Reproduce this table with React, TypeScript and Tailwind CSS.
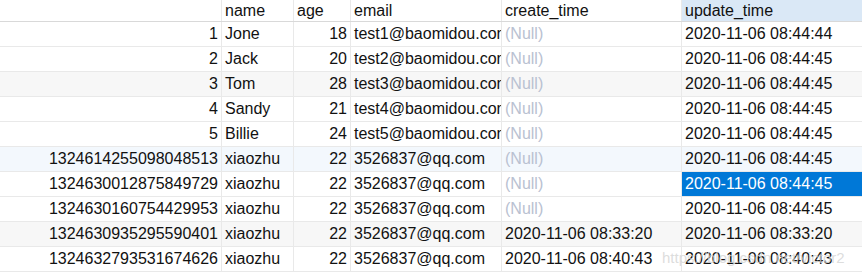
import clsx from 'clsx';

type Row = {
  id: string;
  name: string;
  age: number;
  email: string;
  createTime: string | null;
  updateTime: string;
  bg?: 'gray' | 'active';
  selected?: boolean;
};

const rows: Row[] = [
  { id: '1', name: 'Jone', age: 18, email: 'test1@baomidou.com', createTime: null, updateTime: '2020-11-06 08:44:44' },
  { id: '2', name: 'Jack', age: 20, email: 'test2@baomidou.com', createTime: null, updateTime: '2020-11-06 08:44:45' },
  { id: '3', name: 'Tom', age: 28, email: 'test3@baomidou.com', createTime: null, updateTime: '2020-11-06 08:44:45', bg: 'gray' },
  { id: '4', name: 'Sandy', age: 21, email: 'test4@baomidou.com', createTime: null, updateTime: '2020-11-06 08:44:45' },
  { id: '5', name: 'Billie', age: 24, email: 'test5@baomidou.com', createTime: null, updateTime: '2020-11-06 08:44:45' },
  { id: '1324614255098048513', name: 'xiaozhu', age: 22, email: '3526837@qq.com', createTime: null, updateTime: '2020-11-06 08:44:45', bg: 'active' },
  { id: '1324630012875849729', name: 'xiaozhu', age: 22, email: '3526837@qq.com', createTime: null, updateTime: '2020-11-06 08:44:45', selected: true },
  { id: '1324630160754429953', name: 'xiaozhu', age: 22, email: '3526837@qq.com', createTime: null, updateTime: '2020-11-06 08:44:45' },
  { id: '1324630935295590401', name: 'xiaozhu', age: 22, email: '3526837@qq.com', createTime: '2020-11-06 08:33:20', updateTime: '2020-11-06 08:33:20', bg: 'gray' },
  { id: '1324632793531674626', name: 'xiaozhu', age: 22, email: '3526837@qq.com', createTime: '2020-11-06 08:40:43', updateTime: '2020-11-06 08:40:43' },
];

const cell = 'h-full shrink-0 overflow-hidden whitespace-nowrap border-r border-[#e9e9e9] px-[3px]';

export default function App() {
  return (
    <div className="relative h-[279px] w-[862px] overflow-hidden bg-white font-['Liberation_Sans',Arial,sans-serif] text-[16px] leading-[24px] text-[#111]">
      <div className="flex h-[22px] border-b border-[#d9d9d9] leading-[21px]">
        <div className={clsx(cell, 'w-[222px]')} />
        <div className={clsx(cell, 'w-[72px]')}>name</div>
        <div className={clsx(cell, 'w-[57px]')}>age</div>
        <div className={clsx(cell, 'w-[151px]')}>email</div>
        <div className={clsx(cell, 'w-[180px]')}>create_time</div>
        <div className="h-full flex-1 bg-[#dae8f6] px-[3px]">update_time</div>
      </div>
      {rows.map((r) => (
        <div
          key={r.id}
          className={clsx(
            'flex h-[25px] border-b border-[#e9e9e9]',
            r.bg === 'gray' && 'bg-[#f7f7f7]',
            r.bg === 'active' && 'bg-[#f3f8fd]',
          )}
        >
          <div className={clsx(cell, 'w-[222px] text-right')}>{r.id}</div>
          <div className={clsx(cell, 'w-[72px]')}>{r.name}</div>
          <div className={clsx(cell, 'w-[57px] text-right')}>{r.age}</div>
          <div className={clsx(cell, 'w-[151px] text-clip')}>{r.email}</div>
          <div className={clsx(cell, 'w-[180px]', !r.createTime && 'text-[#b9c1d1]')}>
            {r.createTime ?? '(Null)'}
          </div>
          <div className={clsx('h-full flex-1 px-[3px]', r.selected && 'bg-[#0078d7] text-white')}>
            {r.updateTime}
          </div>
        </div>
      ))}
      <div className="pointer-events-none absolute left-[662px] top-[246px] text-[15px] leading-[24px] text-[#d4d4d4]/80">
        https://blog.csdn.net/victor2
      </div>
    </div>
  );
}
